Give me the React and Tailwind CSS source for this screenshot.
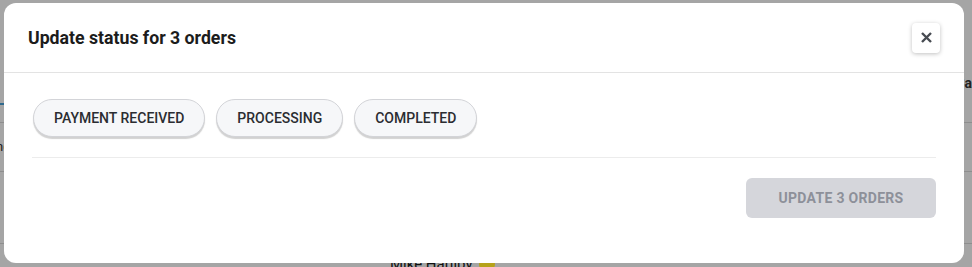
import React from "react";

const chips = ["PAYMENT RECEIVED", "PROCESSING", "COMPLETED"];

export default function App() {
  return (
    <div
      className="relative w-[972px] h-[267px] overflow-hidden bg-[#a5a5a5]"
      style={{ fontFamily: "Roboto, 'Liberation Sans', sans-serif" }}
    >
      {/* dimmed page behind the dialog */}
      <div className="absolute inset-0 flex flex-col">
        <div className="h-[70px] shrink-0" />
        <div className="flex justify-end h-[26px] shrink-0 items-center">
          <span className="text-[14px] font-bold text-[#222] mr-[-5px]">Car</span>
        </div>
        <div className="h-[7px] shrink-0" />
        <div className="w-[10px] h-[2px] shrink-0 bg-[#2f6a8e]" />
        <div className="h-[17px] shrink-0" />
        <div className="h-px shrink-0 bg-[#8e8e8e]" />
        <div className="h-[48px] shrink-0 flex items-center">
          <span className="text-[13px] text-[#222] ml-[-4px]">nd</span>
        </div>
        <div className="h-px shrink-0 bg-[#8e8e8e]" />
        <div className="h-[71px] shrink-0" />
        <div className="h-px shrink-0 bg-[#8e8e8e]" />
        <div className="h-[10px] shrink-0" />
        <div className="flex shrink-0 items-center gap-[6px] pl-[390px] text-[15px] leading-[20px] text-[#111]">
          Mike Harliby
          <span className="inline-block w-[16px] h-[16px] rounded-full bg-[#b6a21a]" />
        </div>
      </div>

      {/* dialog */}
      <div className="absolute left-[4px] top-[3px] w-[960px] h-[260px] bg-white rounded-[12px] flex flex-col">
        <div className="h-[70px] flex items-center justify-between pl-[24px] pr-[24px] border-b border-[#e3e3e3]">
          <h2 className="text-[17.7px] font-bold text-[#1c1c1c] pt-px">
            Update status for 3 orders
          </h2>
          <button className="w-[28px] h-[30px] rounded-[4px] bg-white shadow-[0_1px_4px_rgba(0,0,0,0.25)] flex items-center justify-center">
            <svg width="11" height="11" viewBox="0 0 11 11">
              <path d="M1 1L10 10M10 1L1 10" stroke="#474b52" strokeWidth="2.4" strokeLinecap="butt" />
            </svg>
          </button>
        </div>

        <div className="px-[28px] pt-[26px]">
          <div className="flex gap-[11px] pl-px">
            {chips.map((c) => (
              <button
                key={c}
                className="h-[38px] px-[20px] rounded-full bg-[#f6f7f9] border border-[#d3d4d8] shadow-[0_2px_1px_rgba(0,0,0,0.18)] text-[14px] font-medium text-[#2b2d31]"
              >
                {c}
              </button>
            ))}
          </div>
          <div className="mt-[20px] h-px bg-[#ececec]" />
          <div className="flex justify-end mt-[20px]">
            <button className="w-[190px] h-[40px] rounded-[6px] bg-[#d5d6db] text-[14px] font-bold tracking-[0.3px] text-[#8d9099] flex items-center justify-center">
              UPDATE 3 ORDERS
            </button>
          </div>
        </div>
      </div>
    </div>
  );
}
